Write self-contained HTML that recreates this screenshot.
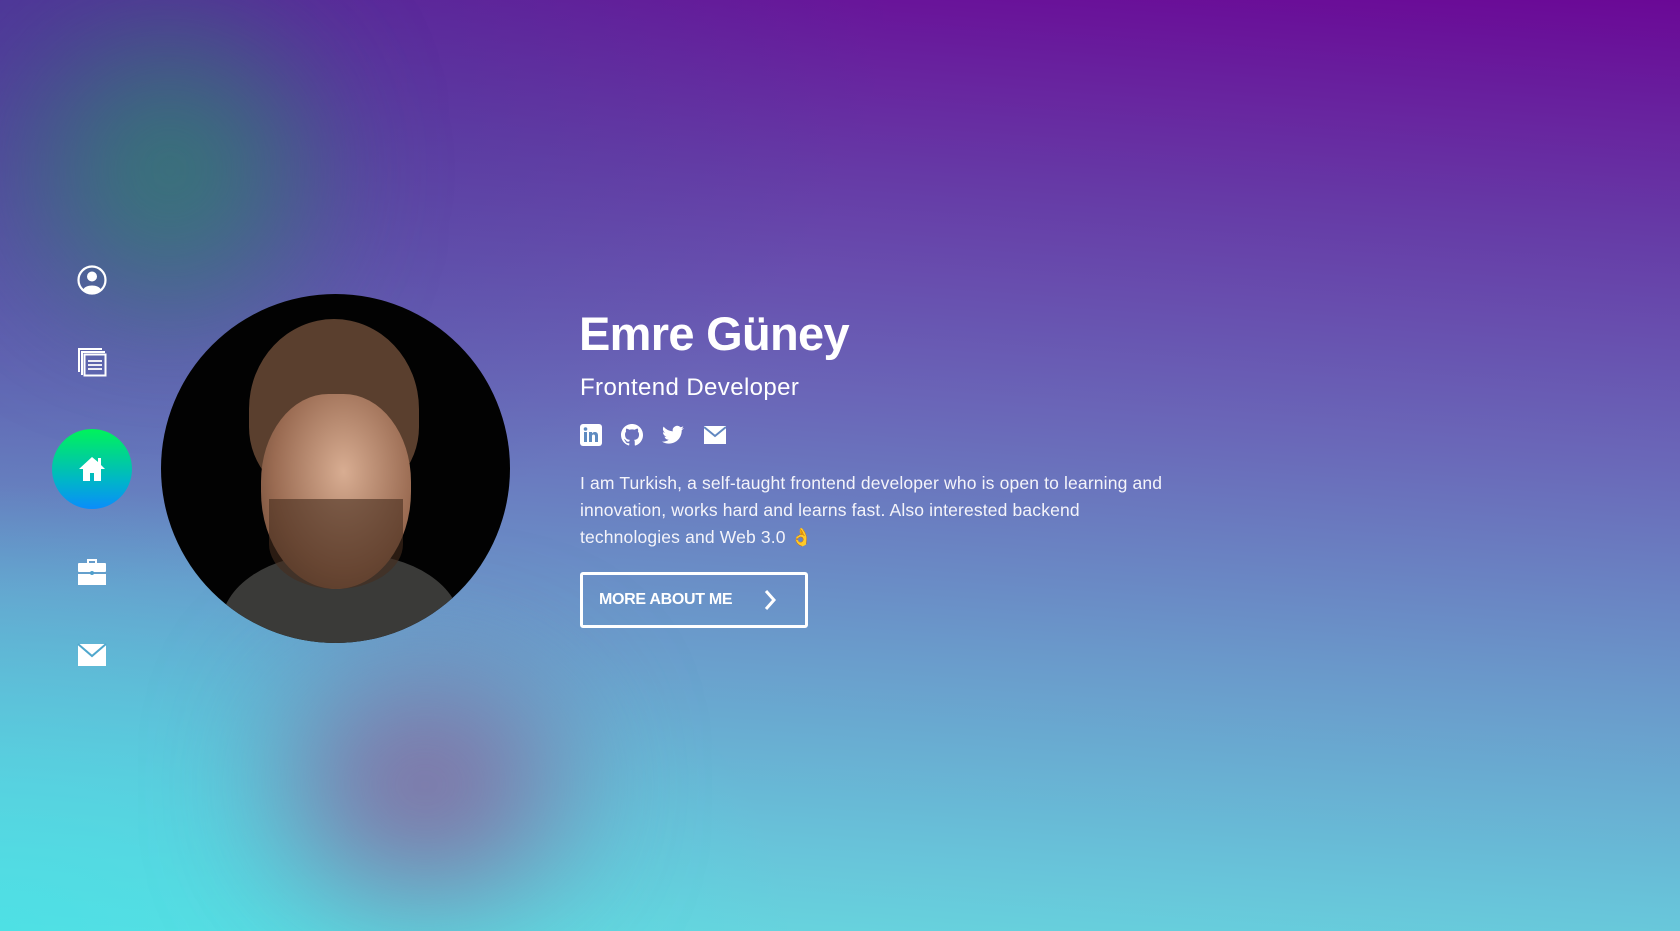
<!DOCTYPE html>
<html><head><meta charset="utf-8"><style>
*{margin:0;padding:0;box-sizing:border-box}
body{width:1680px;height:931px;overflow:hidden;position:relative;font-family:"Liberation Sans",sans-serif;color:#fff;
background:linear-gradient(184deg,#6a0896 0%,#663aa6 22%,#6a69b9 45%,#6a98ca 66%,#68c2d9 86%,#66dde0 100%);}
.bl{position:absolute;border-radius:50%;filter:blur(70px)}
.nav{position:absolute;left:77px;width:30px;height:30px}
</style></head><body>
<div style="position:absolute;left:0;top:0;width:900px;height:600px;background:radial-gradient(ellipse at 0% 0%,rgba(60,70,150,0.55),rgba(60,70,150,0) 70%)"></div>
<div style="position:absolute;left:0;bottom:0;width:800px;height:450px;background:radial-gradient(ellipse at 0% 100%,rgba(70,225,230,0.75),rgba(70,225,230,0) 70%)"></div>
<div class="bl" style="left:40px;top:40px;width:260px;height:260px;background:rgba(40,140,100,0.7)"></div>
<div class="bl" style="left:290px;top:680px;width:270px;height:210px;background:rgba(140,90,150,0.85)"></div>

<svg class="nav" style="top:265px" viewBox="0 0 30 30"><circle cx="15" cy="15" r="13.5" fill="none" stroke="#fff" stroke-width="2.2"/><circle cx="15" cy="11.5" r="5" fill="#fff"/><path d="M6 25c2-6 16-6 18 0a12 12 0 0 1-18 0z" fill="#fff"/></svg>
<svg class="nav" style="top:347px" viewBox="0 0 30 30"><path d="M1 1h24v2H3v22H1z M4 4h24v2H6v22H4z" fill="#fff"/><rect x="7.5" y="7.5" width="21" height="21" fill="none" stroke="#fff" stroke-width="2"/><path d="M11 14h14M11 18h14M11 22h14" stroke="#fff" stroke-width="1.8"/></svg>
<div style="position:absolute;left:52px;top:429px;width:80px;height:80px;border-radius:50%;background:linear-gradient(180deg,#00f35a,#00b5c9 65%,#0a8dfb)"></div>
<svg style="position:absolute;left:77px;top:454px;width:30px;height:30px" viewBox="0 0 30 30"><path d="M15 3L2 15h4v12h7v-8h4v8h7V15h4L24 11V4h-3v4z" fill="#fff"/></svg>
<svg class="nav" style="top:557px" viewBox="0 0 30 30"><path d="M11 6V3h8v3" fill="none" stroke="#fff" stroke-width="2"/><rect x="1" y="6" width="28" height="9" rx="1" fill="#fff"/><rect x="1" y="17" width="28" height="11" fill="#fff"/><circle cx="15" cy="16" r="2" fill="#4f9fcc"/></svg>
<svg class="nav" style="top:640px" viewBox="0 0 30 30"><path d="M1 4h28v22H1z" fill="#fff"/><path d="M1 4l14 12L29 4" fill="none" stroke="#4fa7cd" stroke-width="2"/></svg>

<div style="position:absolute;left:161px;top:294px;width:349px;height:349px;border-radius:50%;overflow:hidden;background:#020202">
 <div style="position:absolute;left:60px;top:260px;width:240px;height:160px;border-radius:45%;background:#3a3a38"></div>
 <div style="position:absolute;left:88px;top:25px;width:170px;height:180px;border-radius:50% 50% 40% 40%;background:#5a3f2e"></div>
 <div style="position:absolute;left:100px;top:100px;width:150px;height:195px;border-radius:45% 45% 50% 50%;background:radial-gradient(ellipse at 55% 40%,#d8ad92,#9a6b52 60%,#5c3d2c)"></div>
 <div style="position:absolute;left:108px;top:205px;width:134px;height:90px;border-radius:0 0 50% 50%;background:rgba(70,45,30,0.6)"></div>
</div>

<div style="position:absolute;left:579px;top:306px;font-size:47px;font-weight:bold;letter-spacing:-0.7px">Emre Güney</div>
<div style="position:absolute;left:580px;top:374px;font-size:24px;font-weight:300;letter-spacing:0.4px">Frontend Developer</div>
<svg style="position:absolute;left:580px;top:424px;width:22px;height:22px" viewBox="0 0 22 22"><rect width="22" height="22" rx="3" fill="#fff"/><rect x="4" y="8" width="3" height="10" fill="#5e8bc0"/><circle cx="5.5" cy="5" r="1.8" fill="#5e8bc0"/><path d="M9 8h3v1.5c1-2 6-2.5 6 2V18h-3v-6c0-2-3-2-3 0v6H9z" fill="#5e8bc0"/></svg>
<svg style="position:absolute;left:621px;top:424px;width:22px;height:22px" viewBox="0 0 16 16"><path fill="#fff" d="M8 0C3.580 0 0 3.58 0 8c0 3.54 2.29 6.53 5.47 7.59.4.07.55-.17.55-.38v-1.33c-2.23.48-2.7-1.07-2.7-1.07-.36-.92-.89-1.170-.89-1.17-.73-.5.06-.49.06-.49.8.06 1.230.83 1.23.83.71 1.23 1.87.87 2.33.66.07-.52.28-.87.51-1.07-1.78-.2-3.64-.89-3.64-3.95 0-.87.31-1.59.82-2.15-.08-.2-.36-1.02.08-2.12 0 0 .67-.21 2.2.82a7.6 7.6 0 0 1 4 0c1.53-1.04 2.2-.82 2.2-.82.44 1.1.16 1.92.08 2.12.51.56.82 1.27.82 2.15 0 3.07-1.87 3.75-3.65 3.950.29.25.54.73.54 1.48v2.2c0 .21.15.46.55.38A8 8 0 0 0 16 8c0-4.42-3.58-8-8-8z"/></svg>
<svg style="position:absolute;left:662px;top:425px;width:22px;height:20px" viewBox="0 0 24 20"><path fill="#fff" d="M24 2.4a9.8 9.8 0 0 1-2.8.8A4.9 4.9 0 0 0 23.3.4a9.9 9.9 0 0 1-3.1 1.2A4.9 4.9 0 0 0 11.8 6 14 14 0 0 1 1.7.9a4.9 4.9 0 0 0 1.5 6.6A4.9 4.9 0 0 1 1 6.9a4.9 4.9 0 0 0 3.9 4.8 4.9 4.9 0 0 1-2.2.1 4.9 4.9 0 0 0 4.6 3.4A9.9 9.9 0 0 1 0 17.2 14 14 0 0 0 7.5 19.4c9.1 0 14-7.5 14-14v-.6A10 10 0 0 0 24 2.4z"/></svg>
<svg style="position:absolute;left:704px;top:426px;width:22px;height:18px" viewBox="0 0 22 18"><rect width="22" height="18" fill="#fff"/><path d="M0 1l11 9 11-9" fill="none" stroke="#6187c0" stroke-width="2"/></svg>

<div style="position:absolute;left:580px;top:470px;width:600px;font-size:17.5px;line-height:27px;font-weight:300;color:#f4f4fa;letter-spacing:0.15px">I am Turkish, a self-taught frontend developer who is open to learning and<br>innovation, works hard and learns fast. Also interested backend<br>technologies and Web 3.0 <span style="color:#f6b800">👌</span></div>

<div style="position:absolute;left:580px;top:572px;width:228px;height:56px;border:3px solid #fff;border-radius:3px">
 <div style="position:absolute;left:16px;top:16px;font-size:16px;font-weight:bold;letter-spacing:-0.3px">MORE ABOUT ME</div>
 <svg style="position:absolute;left:180px;top:14px;width:14px;height:22px" viewBox="0 0 14 22"><path d="M3 2l8 9-8 9" fill="none" stroke="#fff" stroke-width="3"/></svg>
</div>
</body></html>
